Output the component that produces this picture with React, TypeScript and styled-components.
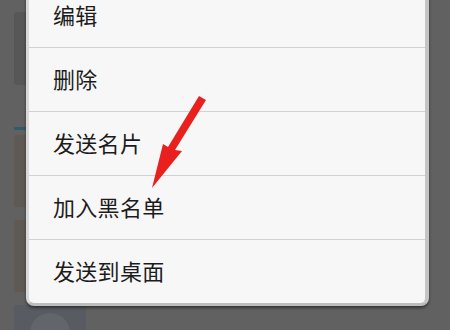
import React from "react";
import styled, { createGlobalStyle } from "styled-components";

const Global = createGlobalStyle`
  html, body { margin: 0; padding: 0; }
  body {
    width: 450px;
    height: 330px;
    overflow: hidden;
    background: #616161;
    font-family: "Noto Sans CJK SC", "Noto Sans", sans-serif;
  }
`;

const Screen = styled.div`
  position: relative;
  width: 450px;
  height: 330px;
  overflow: hidden;
  background: #616161;
`;

const BackList = styled.div`
  display: flex;
  flex-direction: column;
  padding: 12px 0 0 14px;
  width: 72px;
`;

const Thumb = styled.div<{ $bg: string; $h: number; $mt?: number }>`
  height: ${(p) => p.$h}px;
  margin-top: ${(p) => p.$mt ?? 0}px;
  background: ${(p) => p.$bg};
  border-radius: 3px;
`;

const TealLine = styled.div`
  margin-top: 42px;
  height: 3px;
  width: 14px;
  background: #2f5d66;
`;

const Footer = styled.div`
  margin-top: 13px;
  height: 40px;
  background: #585b62;
  display: flex;
  justify-content: center;
  padding-top: 8px;
`;

const Avatar = styled.div`
  width: 40px;
  height: 40px;
  border-radius: 50%;
  background: #62656b;
`;

const Dialog = styled.div`
  position: absolute;
  top: -16px;
  left: 26px;
  width: 396px;
  background: #f7f7f7;
  border-left: 3px solid #d9d9d9;
  border-right: 4px solid #c4c4c4;
  border-bottom: 3px solid #bdbdbd;
  border-radius: 0 0 8px 8px;
  box-shadow: 0 2px 3px rgba(0, 0, 0, 0.45);
  display: flex;
  flex-direction: column;
`;

const Item = styled.div<{ $last?: boolean }>`
  height: 60px;
  padding-bottom: 3px;
  display: flex;
  align-items: center;
  padding-left: 24px;
  font-size: 22px;
  color: #1c1c1c;
  border-bottom: ${(p) => (p.$last ? "none" : "1px solid #d2d2d2")};
  letter-spacing: 0.3px;
`;

const ArrowSvg = styled.svg`
  position: absolute;
  left: 0;
  top: 0;
  pointer-events: none;
`;

const items = ["编辑", "删除", "发送名片", "加入黑名单", "发送到桌面"];

export default function App() {
  return (
    <Screen>
      <Global />
      <BackList>
        <Thumb $bg="#575757" $h={73} />
        <TealLine />
        <Thumb $bg="#5f5955" $h={72} $mt={5} />
        <Thumb $bg="#5f5955" $h={72} $mt={13} />
        <Footer>
          <Avatar />
        </Footer>
      </BackList>
      <Dialog>
        {items.map((t, i) => (
          <Item key={t} $last={i === items.length - 1}>
            {t}
          </Item>
        ))}
      </Dialog>
      <ArrowSvg width="450" height="330" viewBox="0 0 450 330">
        <polygon
          points="199,96 206,100 175,150 182,151 152,188 163,144 168,147"
          fill="#e8211f"
        />
      </ArrowSvg>
    </Screen>
  );
}
